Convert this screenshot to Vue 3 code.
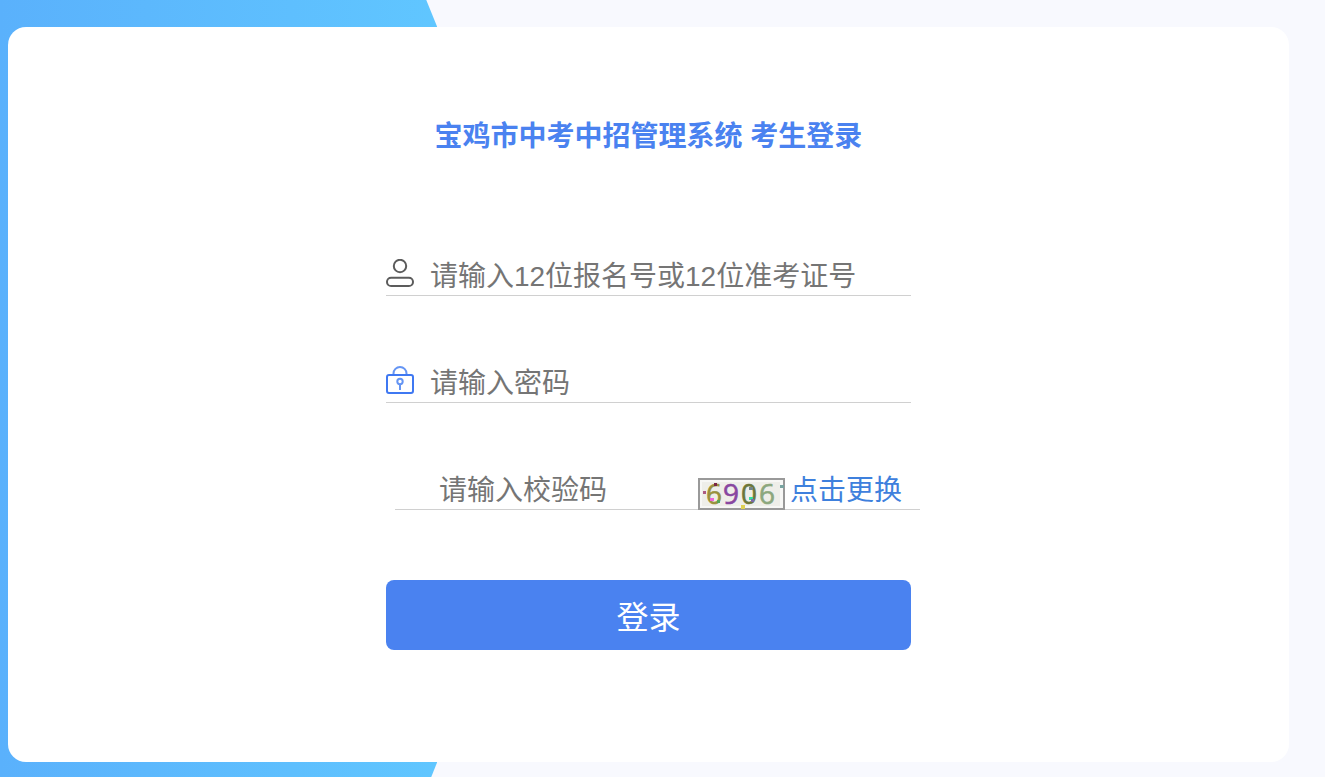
<script setup>
import { ref } from 'vue'

const account = ref('')
const password = ref('')
const code = ref('')
</script>

<template>
  <div class="page">
    <div class="backdrop" aria-hidden="true"></div>
    <main class="card">
      <form class="form" @submit.prevent>
        <h1 class="title">宝鸡市中考中招管理系统 考生登录</h1>

        <div class="field">
          <svg class="icon" viewBox="0 0 28 28" fill="none" stroke="#5c5c5c" stroke-width="2" aria-hidden="true">
            <circle cx="14" cy="7" r="6.2" />
            <rect x="1" y="18.7" width="26" height="8.3" rx="4.1" />
          </svg>
          <input v-model="account" class="input" type="text" aria-label="报名号或准考证号" placeholder="请输入12位报名号或12位准考证号" />
        </div>

        <div class="field">
          <svg class="icon" viewBox="0 0 28 28" fill="none" stroke="#3f78f2" stroke-width="2" aria-hidden="true">
            <path d="M7.5 9V7.500a6.500 6.500 0 0 1 13 0V9" stroke="#6595f4" />
            <rect x="1" y="9" width="26" height="18" rx="2" />
            <circle cx="14" cy="15.500" r="2.700" stroke="#6595f4" />
            <path d="M14 18v6" stroke="#6595f4" />
          </svg>
          <input v-model="password" class="input" type="password" aria-label="密码" placeholder="请输入密码" />
        </div>

        <div class="field code">
          <input v-model="code" class="input" type="text" aria-label="校验码" placeholder="请输入校验码" />
          <svg class="captcha" viewBox="0 0 87 32" role="img" aria-label="校验码图片">
            <rect width="87" height="32" fill="#999" />
            <rect x="2" y="2" width="83" height="28" fill="#f7f7f5" />
            <rect x="4" y="4" width="78" height="24" fill="#eeeee9" />
            <g class="digits">
              <text x="8" y="26" fill="#9a913d" stroke="#9a913d">6</text>
              <text x="25" y="26" fill="#8846a0" stroke="#8846a0">9</text>
              <text x="43" y="26" fill="#6d7638" stroke="#6d7638">0</text>
              <text x="61" y="26" fill="#8ca77d" stroke="#8ca77d">6</text>
            </g>
            <rect x="5" y="13" width="3" height="3" fill="#ad5b83" />
            <rect x="16" y="5" width="3" height="3" fill="#7a2744" />
            <rect x="12" y="20" width="4" height="3" fill="#ee66d5" />
            <rect x="19" y="22" width="3" height="3" fill="#55a755" />
            <rect x="51" y="9" width="4" height="3" fill="#72858a" />
            <rect x="51" y="19" width="4" height="3" fill="#35dc9c" />
            <rect x="53" y="21" width="3" height="3" fill="#7b68a5" />
            <rect x="82" y="7" width="4" height="3" fill="#78a3a0" />
            <rect x="43" y="27" width="4" height="4" fill="#dfd052" />
          </svg>
          <a class="refresh" href="#">点击更换</a>
        </div>

        <button class="submit" type="submit">登录</button>
      </form>
    </main>
  </div>
</template>

<style>
body {
  margin: 0;
}
</style>

<style scoped>
.page {
  position: relative;
  display: flex;
  box-sizing: border-box;
  min-height: 100vh;
  padding: 27px 36px 15px 8px;
  background: #f8f9fe;
  font-family: "Liberation Sans", "Noto Sans CJK SC", sans-serif;
}

.backdrop {
  position: absolute;
  inset: 0 auto 0 0;
  width: 33%;
  background: linear-gradient(90deg, #5ab1fc, #60c6ff);
  clip-path: polygon(0 0, calc(100% - 11px) 0, 100% 27px, 100% calc(100% - 15px), calc(100% - 6px) 100%, 0 100%);
}

.card {
  position: relative;
  flex: 1;
  box-sizing: border-box;
  padding: 94px 0 112px;
  border-radius: 18px;
  background: #fff;
}

.form {
  display: flex;
  flex-direction: column;
  width: 41%;
  min-width: 480px;
  margin: 0 auto;
}

.title {
  margin: 0 0 103px;
  color: #4a82f0;
  font-size: 28px;
  line-height: 32px;
  text-align: center;
  white-space: nowrap;
}

.field {
  display: flex;
  gap: 16px;
  box-sizing: border-box;
  height: 40px;
  margin-bottom: 67px;
  border-bottom: 1px solid #d0d0d0;
}

.icon {
  flex: none;
  width: 28px;
  height: 28px;
  margin-top: 3px;
}

.input {
  flex: 1;
  min-width: 0;
  padding: 3px 0 0;
  border: 0;
  outline: 0;
  background: transparent;
  color: #333;
  font-family: inherit;
  font-size: 28px;
}

.input::placeholder {
  color: #757575;
}

.code {
  gap: 5px;
  margin: 0 -9px 70px 9px;
  padding: 0 18px 0 44px;
}

.captcha {
  flex: none;
  width: 87px;
  height: 32px;
  margin-top: 8px;
  overflow: visible;
}

.digits {
  font-family: "Open Sans", sans-serif;
  font-size: 28px;
  stroke-width: 0.6;
}

.refresh {
  padding-top: 2px;
  color: #3e80dd;
  font-size: 28px;
  line-height: 38px;
  text-decoration: none;
}

.submit {
  height: 70px;
  padding: 0;
  border: 0;
  border-radius: 8px;
  background: #4a82f0;
  color: #fff;
  font-family: inherit;
  font-size: 32px;
}
</style>
